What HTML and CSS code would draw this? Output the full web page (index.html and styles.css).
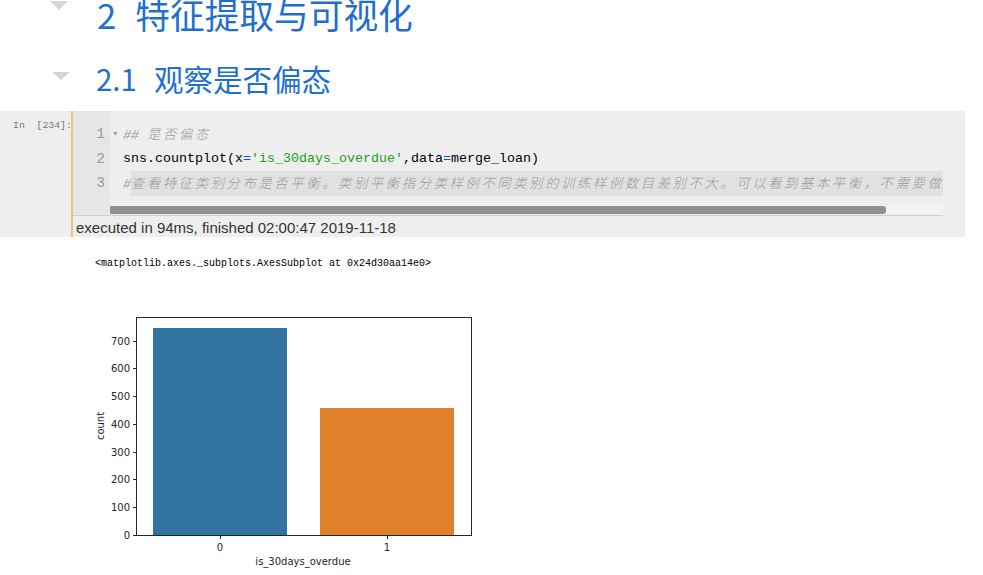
FILE: index.html
```html
<!DOCTYPE html>
<html lang="zh">
<head>
<meta charset="utf-8">
<title>Notebook</title>
<link rel="stylesheet" href="styles.css">
</head>
<body>
<div class="page">
  <div class="heading h1">
    <span class="fold"></span>
    <span class="num">2</span><span class="title">特征提取与可视化</span>
  </div>
  <div class="heading h2">
    <span class="fold"></span>
    <span class="num">2.1</span><span class="title">观察是否偏态</span>
  </div>

  <div class="cell">
    <div class="prompt">In&nbsp;&nbsp;[234]:</div>
    <div class="cell-main">
      <div class="editor">
        <div class="gutter">
          <div class="ln">1<span class="arrow">▾</span></div>
          <div class="ln">2</div>
          <div class="ln">3</div>
        </div>
        <div class="code-wrap">
          <div class="code">
            <div class="line"><span class="cm">## <span class="cjk">是否偏态</span></span></div>
            <div class="line">sns.countplot(x<span class="op">=</span><span class="str">'is_30days_overdue'</span>,data<span class="op">=</span>merge_loan)</div>
            <div class="line"><span class="cm">#<span class="hl cjk">查看特征类别分布是否平衡。类别平衡指分类样例不同类别的训练样例数目差别不大。可以看到基本平衡，不需要做偏态处理</span></span></div>
          </div>
          <div class="scroll"><div class="thumb"></div></div>
        </div>
      </div>
      <div class="executed">executed in 94ms, finished 02:00:47 2019-11-18</div>
    </div>
  </div>

  <div class="output">
    <div class="out-text">&lt;matplotlib.axes._subplots.AxesSubplot at 0x24d30aa14e0&gt;</div>
    <svg class="chart" width="400" height="265" viewBox="0 0 400 265">
      <rect x="73" y="19" width="134" height="207" fill="#3274a1"/>
      <rect x="240" y="99" width="134" height="127" fill="#e1812c"/>
      <rect x="56.5" y="8.5" width="335" height="218" fill="none" stroke="#262626" stroke-width="1"/>
      <g stroke="#262626" stroke-width="1">
        <line x1="53" y1="226.5" x2="56" y2="226.5"/>
        <line x1="53" y1="198.5" x2="56" y2="198.5"/>
        <line x1="53" y1="170.5" x2="56" y2="170.5"/>
        <line x1="53" y1="143.5" x2="56" y2="143.5"/>
        <line x1="53" y1="115.5" x2="56" y2="115.5"/>
        <line x1="53" y1="87.5" x2="56" y2="87.5"/>
        <line x1="53" y1="59.5" x2="56" y2="59.5"/>
        <line x1="53" y1="32.5" x2="56" y2="32.5"/>
        <line x1="140.5" y1="227" x2="140.5" y2="230"/>
        <line x1="307.5" y1="227" x2="307.5" y2="230"/>
      </g>
      <g class="tick" text-anchor="end">
        <text x="50" y="230">0</text>
        <text x="50" y="202">100</text>
        <text x="50" y="174">200</text>
        <text x="50" y="147">300</text>
        <text x="50" y="119">400</text>
        <text x="50" y="91">500</text>
        <text x="50" y="63">600</text>
        <text x="50" y="36">700</text>
      </g>
      <g class="tick" text-anchor="middle">
        <text x="140" y="242">0</text>
        <text x="307" y="242">1</text>
        <text x="223" y="256">is_30days_overdue</text>
        <text x="24" y="117" transform="rotate(-90 24 117)">count</text>
      </g>
    </svg>
  </div>
</div>
</body>
</html>
```

FILE: styles.css
```css
html, body {
  margin: 0;
  padding: 0;
  background: #ffffff;
}

.page {
  width: 983px;
  height: 575px;
  overflow: hidden;
}

.heading {
  display: flex;
  align-items: center;
  color: #1f6fd1;
  font-family: "Noto Sans CJK SC", "Noto Sans", sans-serif;
  white-space: nowrap;
}

.fold {
  width: 0;
  height: 0;
  border-left: 9px solid transparent;
  border-right: 9px solid transparent;
  border-top: 9px solid #d6d6d6;
}

.h1 {
  height: 34px;
  margin-top: -3px;
  font-size: 34.7px;
  line-height: 34px;
}

.h1 .fold {
  margin-left: 50px;
  margin-right: 29px;
  margin-top: -17px;
}

.h1 .num {
  margin-right: 19px;
}

.h2 {
  height: 30px;
  margin-top: 32px;
  font-size: 29.5px;
  line-height: 30px;
}

.h2 .fold {
  margin-left: 52px;
  margin-right: 26px;
  margin-top: -5px;
  border-top-width: 8px;
}

.h2 .num {
  margin-right: 17px;
}

.cell {
  display: flex;
  margin-top: 18px;
  width: 965px;
  height: 126px;
  background: #eeeeee;
  border-top-right-radius: 3px;
}

.prompt {
  width: 71px;
  padding: 9px 0 0 13px;
  box-sizing: border-box;
  font-family: "Liberation Mono", monospace;
  font-size: 9.8px;
  color: #777777;
  white-space: nowrap;
}

.cell-main {
  border-left: 2px solid #f3bd86;
  display: flex;
  flex-direction: column;
}

.editor {
  display: flex;
  width: 870px;
  height: 104px;
  border-bottom: 1px solid #cfcfcf;
}

.gutter {
  width: 37px;
  background: #e6e6e6;
  padding-top: 11px;
  box-sizing: border-box;
  font-family: "Liberation Mono", monospace;
  font-size: 14px;
  color: #999999;
}

.ln {
  position: relative;
  height: 24.5px;
  line-height: 24.5px;
  text-align: right;
  padding-right: 5px;
}

.arrow {
  position: absolute;
  right: -8px;
  top: 0;
  font-size: 9px;
  color: #888888;
}

.code-wrap {
  flex: 1;
  display: flex;
  flex-direction: column;
  overflow: hidden;
}

.code {
  padding: 11px 0 0 13px;
  height: 95px;
  box-sizing: border-box;
  font-family: "Liberation Mono", "Noto Sans CJK SC", monospace;
  font-size: 13.33px;
  color: #000000;
  white-space: nowrap;
  overflow: hidden;
}

.line {
  height: 24.5px;
  line-height: 24.5px;
}

.cm {
  color: #9a9a9a;
  font-style: italic;
}

.cjk {
  font-family: "Noto Sans CJK SC", sans-serif;
  font-weight: 300;
  letter-spacing: 2.6px;
}

.hl {
  display: inline-block;
  background: #e1e1e1;
  padding-right: 40px;
}

.op {
  color: #0055dd;
}

.str {
  color: #1aa01a;
}

.scroll {
  height: 8px;
  margin-top: 0;
  background: #f2f2f2;
}

.thumb {
  width: 776px;
  height: 8px;
  background: #909090;
  border-radius: 1px 3px 3px 1px;
}

.executed {
  height: 21px;
  line-height: 23px;
  padding-left: 3px;
  font-family: "Liberation Sans", Arial, sans-serif;
  font-size: 15px;
  color: #333333;
  white-space: nowrap;
}

.output {
  display: flex;
  flex-direction: column;
}

.out-text {
  margin: 20px 0 0 95px;
  height: 14px;
  line-height: 14px;
  font-family: "Liberation Mono", monospace;
  font-size: 10px;
  color: #000000;
  white-space: nowrap;
}

.chart {
  display: block;
  margin: 38px 0 0 80px;
}

.tick text {
  font-family: "DejaVu Sans", sans-serif;
  font-size: 10px;
  fill: #262626;
}
```
